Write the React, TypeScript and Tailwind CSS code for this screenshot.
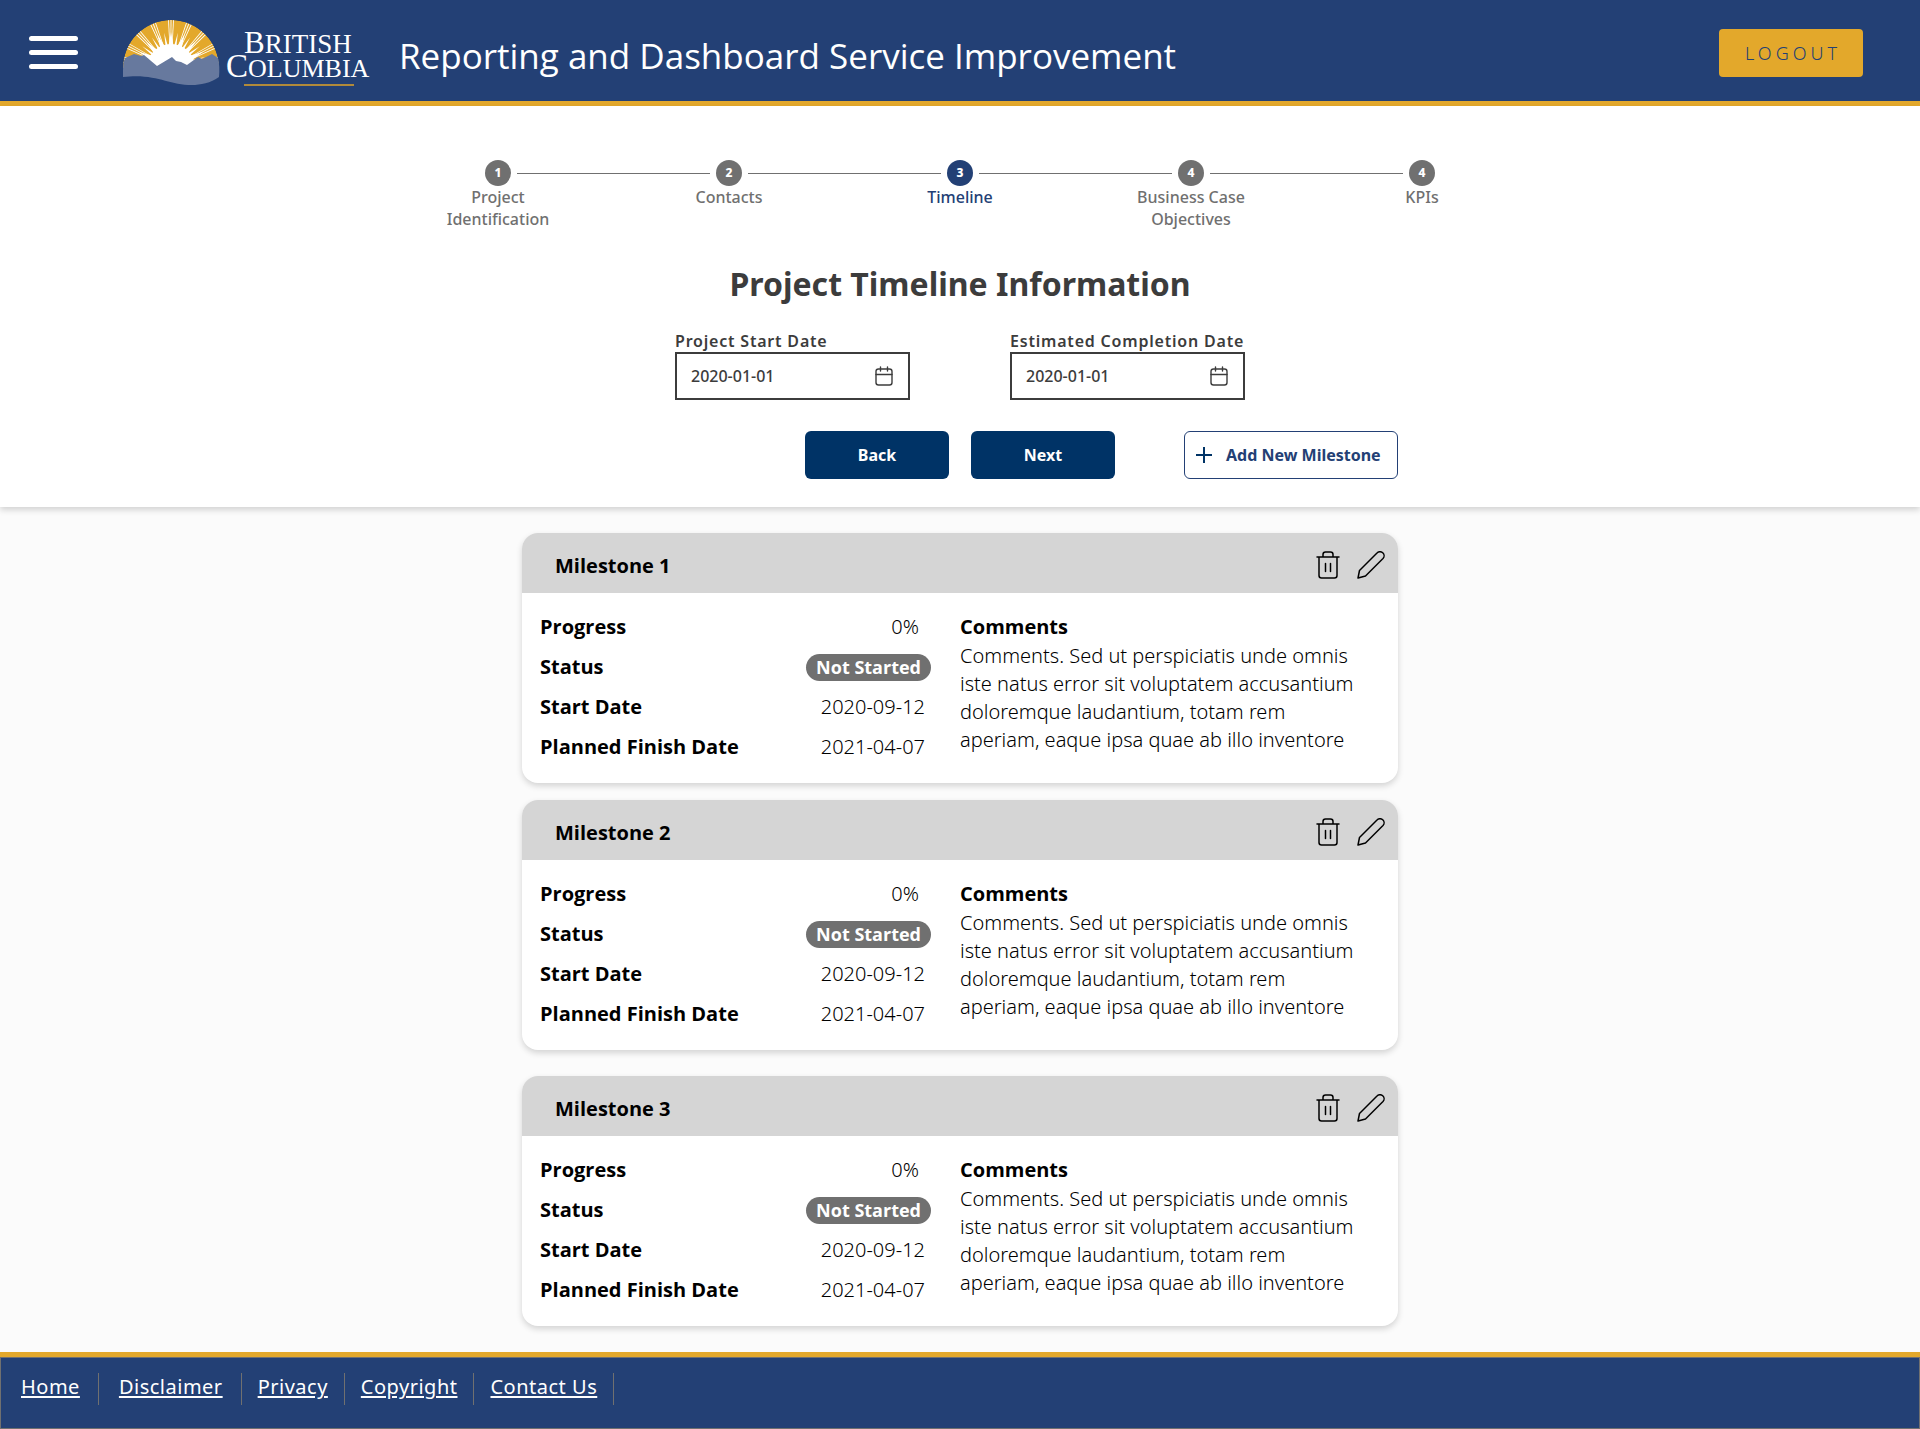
const sans = "font-['Noto_Sans',sans-serif]";
const steps = [
  { n: 1, label: ["Project", "Identification"] },
  { n: 2, label: ["Contacts"] },
  { n: 3, label: ["Timeline"], active: true },
  { n: 4, label: ["Business Case", "Objectives"] },
  { n: 4, label: ["KPIs"] },
];

function point(angle: number, r: number) {
  const a = (angle * Math.PI) / 180;
  return `${(48 + r * Math.sin(a)).toFixed(2)},${(48 - r * Math.cos(a)).toFixed(2)}`;
}

function Logo() {
  const groups = [-80, -63, -43, -22, 0, 22, 43, 63, 80];
  const notches = [-72, -53, -32, -11, 11, 32, 53, 72];
  return (
    <svg width="248" height="66" viewBox="0 0 248 66" role="img" aria-label="British Columbia">
      <clipPath id="sun">
        <path d="M0 48a48 48 0 0 1 96 0z" />
      </clipPath>
      <g clipPath="url(#sun)" fill="#fff">
        <circle cx="48" cy="48" r="48" fill="#e3a82b" />
        <circle cx="48" cy="48" r="24" />
        {groups.map((a) => (
          <g key={a}>
            <polygon points={`${point(a - 6, 23)} ${point(a, 36)} ${point(a + 6, 23)}`} />
            {[-3, 0, 3].map((d) => (
              <polygon key={d} points={`${point(a + d - 1, 22)} ${point(a + d - 0.5, 48)} ${point(a + d + 0.5, 48)} ${point(a + d + 1, 22)}`} />
            ))}
          </g>
        ))}
        {notches.map((a) => (
          <polygon key={a} points={`${point(a - 3, 22)} ${point(a, 36)} ${point(a + 3, 22)}`} />
        ))}
      </g>
      <path
        fill="#67799e"
        d="M0 57C0 48 0 43 2 38l9-4 7 2 3-1 13 11 15-9 4 4 5 1 6 3 11-8 4 2 10-5 6 4q2 8 1 19c-8 6-19 8-27 8-24 0-36-12-69-8z"
      />
      <g fill="#fff" fontFamily="Liberation Serif, serif">
        <text x="121" y="33" fontSize="31">B<tspan fontSize="27">RITISH</tspan></text>
        <text x="103" y="57" fontSize="33">C<tspan fontSize="26">OLUMBIA</tspan></text>
      </g>
      <path d="M121 65h110" stroke="#b18a3a" strokeWidth="2" />
    </svg>
  );
}

function CalendarIcon() {
  return (
    <svg className="h-5 w-5" viewBox="0 0 20 20" fill="none" stroke="#3c3c3c" strokeWidth="1.4" strokeLinecap="round" aria-hidden="true">
      <rect x="2" y="3" width="16" height="16" rx="2.5" />
      <path d="M2 8.5h16M6.5 1v4M13.5 1v4" />
    </svg>
  );
}

function TrashIcon() {
  return (
    <svg className="h-7 w-6" viewBox="0 0 24 28" fill="none" stroke="#000" strokeWidth="1.5" strokeLinecap="round" strokeLinejoin="round" aria-hidden="true">
      <path d="M1 6h22M3 6v18.5q0 2.500 2.500 2.500h13q2.500 0 2.500-2.500V6M7 6V3.500Q7 1 9.500 1h5Q17 1 17 3.500V6M9.500 12.500v8M14.500 12.500v8" />
    </svg>
  );
}

function PencilIcon() {
  return (
    <svg className="h-7 w-7" viewBox="0 0 28 28" fill="none" stroke="#000" strokeWidth="1.5" strokeLinecap="round" strokeLinejoin="round" aria-hidden="true">
      <path d="M1 27 2.500 19.500 20 2a3.800 3.800 0 0 1 6 5.500L8.500 25z" />
    </svg>
  );
}

function Stepper() {
  return (
    <ol className={`${sans} mx-auto grid w-full max-w-[1155px] grid-cols-5 text-base font-medium leading-[22px]`}>
      {steps.map((s, i) => (
        <li key={i} className={s.active ? "text-center text-[#234075]" : "text-center text-[#707070]"}>
          <div className="flex h-[26px] items-center gap-1.5">
            <span className={i === 0 ? "flex-1" : "h-px flex-1 bg-[#707070]"} />
            <span
              className={
                s.active
                  ? "flex size-[26px] items-center justify-center rounded-full bg-[#234075] text-xs font-extrabold text-white"
                  : "flex size-[26px] items-center justify-center rounded-full bg-[#707070] text-xs font-extrabold text-white"
              }
            >
              {s.n}
            </span>
            <span className={i === 4 ? "flex-1" : "h-px flex-1 bg-[#707070]"} />
          </div>
          {s.label.map((l) => (
            <div key={l}>{l}</div>
          ))}
        </li>
      ))}
    </ol>
  );
}

function DateField({ id, label }: { id: string; label: string }) {
  return (
    <div className={`${sans} w-[235px] text-[#3c3c3c]`}>
      <label htmlFor={id} className="block whitespace-nowrap text-base font-semibold leading-[22px] tracking-wider">
        {label}
      </label>
      <div className="flex h-12 items-center border-2 border-[#3c3c3c] pl-3.5 pr-3.5">
        <input id={id} defaultValue="2020-01-01" className="w-full min-w-0 flex-1 bg-transparent text-base font-medium outline-none" />
        <CalendarIcon />
      </div>
    </div>
  );
}

const value = "font-['Noto_Sans',sans-serif] font-[350]";

function Milestone({ n }: { n: number }) {
  return (
    <article className="overflow-hidden rounded-2xl bg-white text-xl leading-7 text-black shadow-[0_3px_6px_rgba(0,0,0,0.16)]">
      <header className="flex h-[60px] items-center justify-between bg-[#d5d5d5] pl-[33px] pr-[13px] pt-1">
        <h2 className="pt-0.5 font-bold">Milestone {n}</h2>
        <div className="flex gap-[17px]">
          <button type="button" aria-label={`Delete milestone ${n}`}><TrashIcon /></button>
          <button type="button" aria-label={`Edit milestone ${n}`}><PencilIcon /></button>
        </div>
      </header>
      <div className="grid grid-cols-2 pb-4 pt-3.5">
        <dl className="pl-[18px] pr-[29px] leading-10">
          <div className="flex justify-between"><dt className="font-bold">Progress</dt><dd className={`${value} pr-3`}>0%</dd></div>
          <div className="flex items-center justify-between">
            <dt className="font-bold">Status</dt>
            <dd className="rounded-full bg-[#707070] px-2.5 text-lg font-bold leading-[27px] text-white">Not Started</dd>
          </div>
          <div className="flex justify-between"><dt className="font-bold">Start Date</dt><dd className={`${value} pr-1.5`}>2020-09-12</dd></div>
          <div className="flex justify-between"><dt className="font-bold">Planned Finish Date</dt><dd className={`${value} pr-1.5`}>2021-04-07</dd></div>
        </dl>
        <div className="pr-8 pt-1.5">
          <h3 className="font-bold">Comments</h3>
          <p className={`${value} pt-px`}>Comments. Sed ut perspiciatis unde omnis iste natus error sit voluptatem accusantium doloremque laudantium, totam rem aperiam, eaque ipsa quae ab illo inventore</p>
        </div>
      </div>
    </article>
  );
}

const links = ["Home", "Disclaimer", "Privacy", "Copyright", "Contact Us"];

export default function App() {
  return (
    <div className="flex min-h-screen flex-col bg-[#fbfbfb] font-['Open_Sans',sans-serif]">
      <header className="flex h-[106px] items-center border-b-[5px] border-[#e3a82b] bg-[#234075] pl-[29px] pr-[57px] pt-1">
        <button type="button" aria-label="Menu" className="flex w-[49px] flex-col gap-[9px]">
          <span className="h-[5px] w-full rounded-full bg-white" />
          <span className="h-[5px] w-full rounded-full bg-white" />
          <span className="h-[5px] w-full rounded-full bg-white" />
        </button>
        <div className="ml-[45px]"><Logo /></div>
        <h1 className="ml-7 flex-1 whitespace-nowrap pt-2 text-[35px] text-white">Reporting and Dashboard Service Improvement</h1>
        <button type="button" className={`${sans} h-12 w-36 rounded bg-[#e3a82b] pl-1 text-lg font-[350] tracking-[4px] text-[#234075]`}>LOGOUT</button>
      </header>

      <section className="z-10 bg-white px-4 pb-7 pt-[54px] shadow-[0_3px_6px_rgba(0,0,0,0.16)]">
        <Stepper />
        <h2 className={`${sans} mt-7 text-center text-[32px] font-bold leading-[52px] text-[#3c3c3c]`}>Project Timeline Information</h2>
        <div className="mt-5 flex justify-center gap-[100px]">
          <DateField id="start" label="Project Start Date" />
          <DateField id="end" label="Estimated Completion Date" />
        </div>
        <div className={`${sans} mx-auto mt-[31px] grid max-w-[876px] grid-cols-[1fr_auto_1fr] text-base font-bold`}>
          <div className="col-start-2 flex gap-[22px]">
            <button type="button" className="h-12 w-36 rounded-md bg-[#003366] text-white">Back</button>
            <button type="button" className="h-12 w-36 rounded-md bg-[#003366] text-white">Next</button>
          </div>
          <button type="button" className="flex h-12 w-[214px] items-center gap-3.5 justify-self-end rounded-md border border-[#234075] pl-[11px] text-[#234075]">
            <svg className="size-4" viewBox="0 0 16 16" stroke="#003366" strokeWidth="2" aria-hidden="true"><path d="M0 8h16M8 0v16" /></svg>
            Add New Milestone
          </button>
        </div>
      </section>

      <main className="mx-auto w-full max-w-[876px] flex-1 pb-[26px] pt-[26px]">
        <div className="mb-[26px] space-y-[17px]">
          <Milestone n={1} />
          <Milestone n={2} />
        </div>
        <Milestone n={3} />
      </main>

      <footer className="border-t-[5px] border-[#e3a82b] bg-[#234075]">
        <nav className={`${sans} flex h-[72px] border border-[#707070] pt-[15px] text-xl tracking-wide text-white`}>
          {links.map((l, i) => (
            <a key={l} href="#" className={i < 2 ? "h-8 border-r border-[#707070] pl-5 pr-[18px] underline underline-offset-2" : "h-8 border-r border-[#707070] px-4 underline underline-offset-2"}>
              {l}
            </a>
          ))}
        </nav>
      </footer>
    </div>
  );
}
